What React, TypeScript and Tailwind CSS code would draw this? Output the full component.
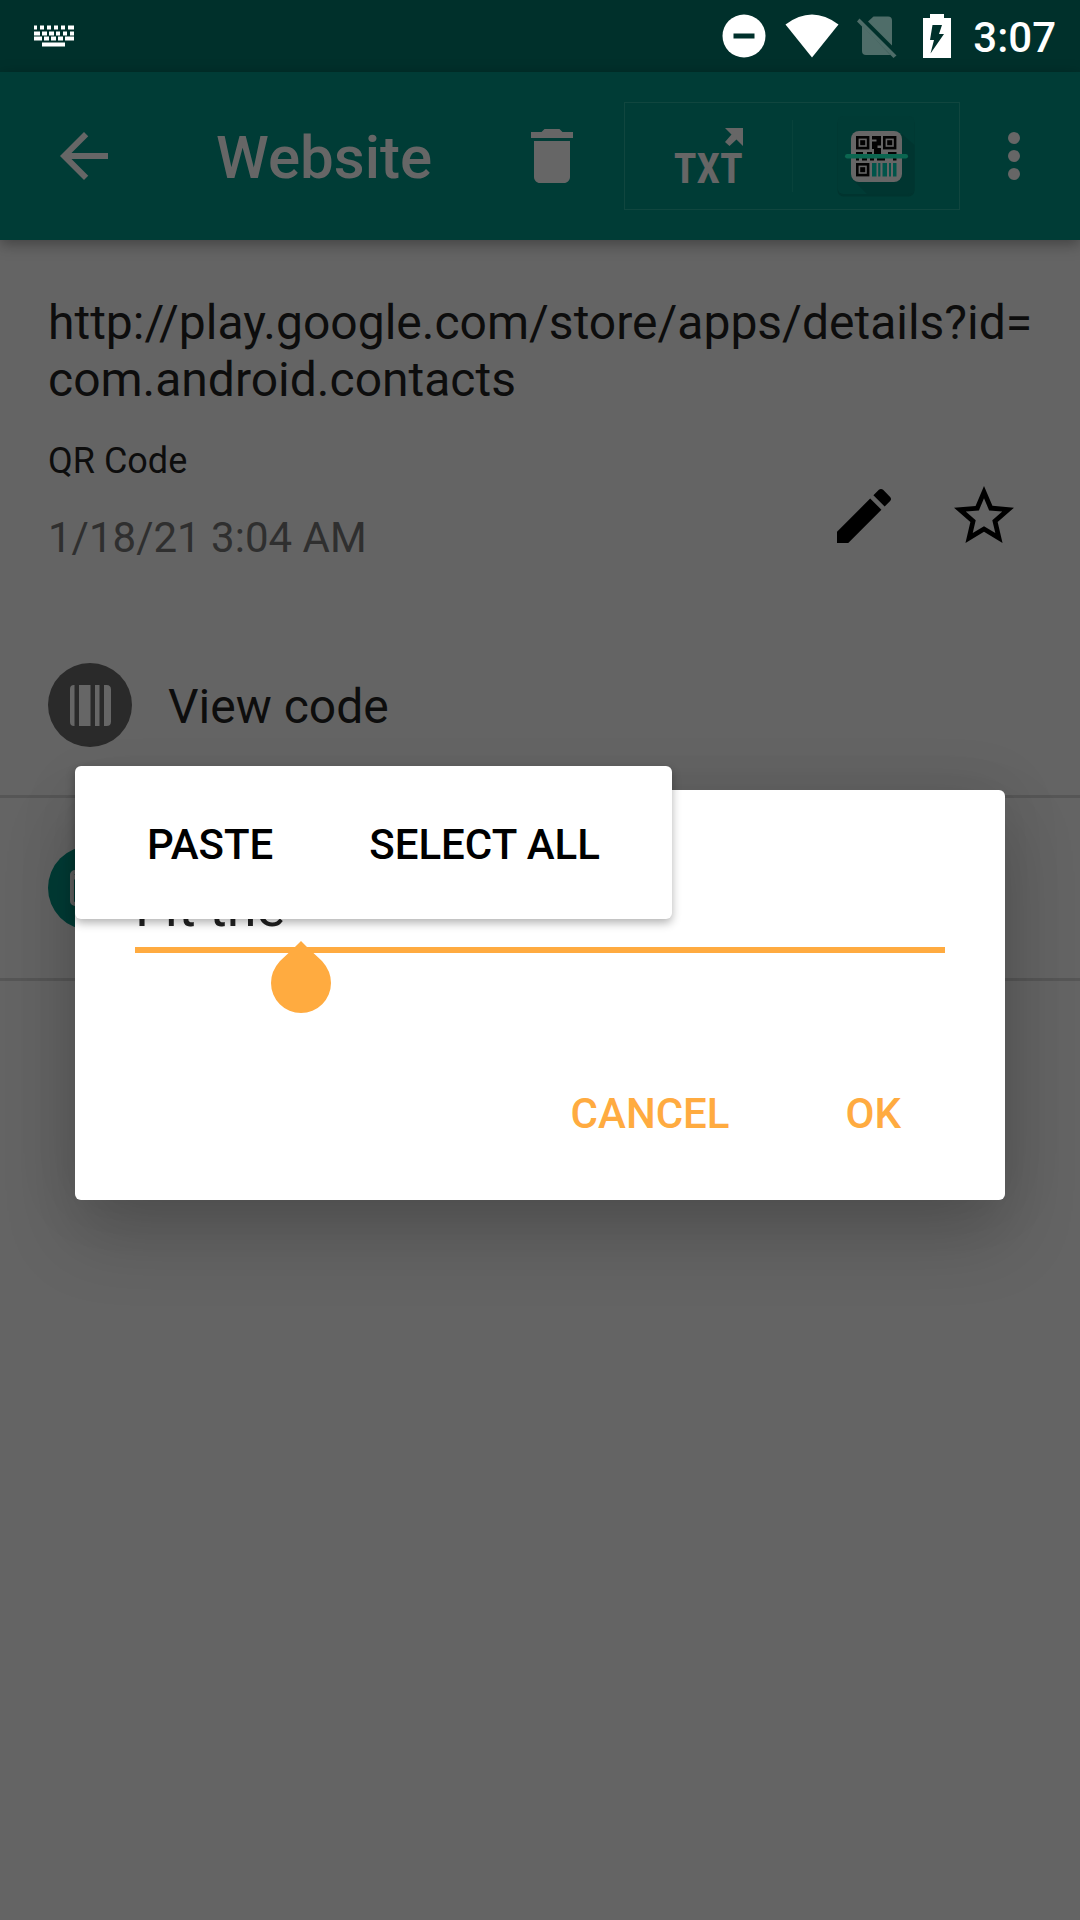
import React from "react";

const KEYS = [
  [0, 0, 3], [6, 0, 4], [13, 0, 4], [20, 0, 4], [27, 0, 4], [34, 0, 6],
  [0, 6, 6], [8, 6, 5], [15, 6, 5], [22, 6, 4], [29, 6, 4], [36, 6, 4],
  [0, 11, 8], [10, 11, 5], [17, 11, 5], [24, 11, 5], [31, 11, 9],
  [8, 17, 23],
];

function KeyboardIcon() {
  return (
    <svg viewBox="0 0 40 22" className="h-[22px] w-10" fill="#fff">
      {KEYS.map(([x, y, w]) => (
        <rect key={`${x}-${y}`} x={x} y={y + 0.5} width={w} height="4" />
      ))}
    </svg>
  );
}

function StatusBar() {
  return (
    <div className="flex h-[72px] items-center justify-between bg-[#00302b] pr-6 pl-[34px]">
      <KeyboardIcon />
      <div className="flex items-center">
        <svg viewBox="0 0 44 44" className="mr-[19px] size-11">
          <circle cx="22" cy="22" r="21.5" fill="#fff" />
          <rect x="11.5" y="19.5" width="21" height="5" fill="#00302b" />
        </svg>
        <svg viewBox="0 0 54 44" className="mr-[17px] h-11 w-[54px]" fill="#fff">
          <path d="M27 43.5 0.5 10.500Q27 -9.500 53.500 10.500Z" />
        </svg>
        <svg viewBox="0 0 42 44" className="mr-[25px] h-11 w-[42px]" fill="#4f6d69">
          <path d="M12 7.500 17.500 2.500H32Q36 2.500 36 6.500V31.500Z" />
          <path d="M6 11.500 34.500 41H10Q6 41 6 37Z" />
          <path d="M1 7.500 3.500 4.500 40.500 41.500 37.500 44Z" />
        </svg>
        <svg viewBox="0 0 28 44" className="mr-[22px] h-11 w-7">
          <path fill="#fff" d="M7 0H21V4H28V44H0V4H7Z" />
          <path fill="#00302b" d="M9.500 11H19L16 20H21L7.500 39.500 11 26H7Z" />
        </svg>
        <time className="pt-1 text-[42px] leading-[48px] font-medium text-white">3:07</time>
      </div>
    </div>
  );
}

function Finder({ x, y }: { x: number; y: number }) {
  return (
    <g>
      <rect x={x + 1.3} y={y + 1.3} width="10.800" height="10.800" fill="none" stroke="#030303" strokeWidth="2.6" />
      <rect x={x + 4.2} y={y + 4.2} width="5" height="5" fill="#030303" />
    </g>
  );
}

function ScannerIcon() {
  return (
    <svg viewBox="0 0 80 84" className="mt-1 h-[84px] w-20">
      <rect x="1.500" y="2" width="77" height="78.500" rx="6" fill="#00342f" />
      <rect x="1.500" y="0" width="77" height="78" rx="6" fill="#003b35" />
      <path d="M66 18 78.500 29V72Q78.500 78 72 78H31L17 64Z" fill="#003530" />
      <rect x="15" y="15" width="51" height="51" rx="8" fill="#666" />
      <Finder x={20} y={20} />
      <Finder x={47} y={20} />
      <Finder x={20} y={47} />
      <path
        fill="#030303"
        d="M36 20H45V29.500H41.500V32H45V37.500H38V33H36V25.500H40.500V23.500H36ZM20 36H27V40H20ZM31 36H36V40H31ZM38 36H45V40H38ZM52 36H60.500V40H52ZM20 41H23V44.500H20ZM26 41H31V44.500H26ZM34 41H38V44.500H34ZM41 41H49V44.500H41ZM57 41H60.500V44.500H57Z"
      />
      <path
        fill="#00544a"
        d="M36 47H40.500V60.500H36ZM42.200 47H44.400V60.500H42.200ZM46.500 47H51V60.500H46.500ZM53 47H55V60.500H53ZM57 47H60.500V60.500H57Z"
      />
      <rect x="9" y="38" width="63" height="4.400" rx="2.200" fill="#0b6650" />
    </svg>
  );
}

function AppBar() {
  return (
    <header className="relative flex h-[168px] items-center bg-[#003c36] pr-[30px] pl-12 text-[#666] shadow-[0_4px_14px_rgba(0,0,0,0.35)]">
      <button type="button" aria-label="Back" className="size-[72px]">
        <svg viewBox="0 0 24 24" fill="currentColor">
          <path d="M20 11H7.830l5.590-5.590L12 4l-8 8 8 8 1.410-1.410L7.830 13H20v-2z" />
        </svg>
      </button>
      <h1 className="ml-24 flex-1 pt-1 text-[60px] leading-[72px] font-medium">Website</h1>
      <button type="button" aria-label="Delete" className="mr-9 size-[72px]">
        <svg viewBox="0 0 24 24" fill="currentColor">
          <path d="M6 19c0 1.100.9 2 2 2h8c1.100 0 2-.9 2-2V7H6v12zM19 4h-3.500l-1-1h-5l-1 1H5v2h14V4z" />
        </svg>
      </button>
      <div className="flex h-[108px] w-[336px] items-center border border-[#10463f]">
        <button type="button" className="flex flex-1 justify-center">
          <span className="flex flex-col items-end gap-2">
            <svg viewBox="0 0 18 18" className="size-[18px]" fill="currentColor">
              <path d="M0 0H18V18L11.500 11.500 4.500 18 0 14 6.500 6.500Z" />
            </svg>
            <span className="font-['Liberation_Sans_Narrow','Roboto_Condensed',Roboto,sans-serif] text-[42px] leading-[30px] font-bold">
              TXT
            </span>
          </span>
        </button>
        <span className="h-[72px] w-px bg-[#08423b]" />
        <button type="button" aria-label="Scanner" className="flex flex-1 justify-center">
          <ScannerIcon />
        </button>
      </div>
      <button type="button" aria-label="More options" className="ml-[18px] size-[72px]">
        <svg viewBox="0 0 24 24" fill="currentColor">
          <circle cx="12" cy="6" r="2" />
          <circle cx="12" cy="12" r="2" />
          <circle cx="12" cy="18" r="2" />
        </svg>
      </button>
    </header>
  );
}

function Details() {
  return (
    <section className="pt-[54px] pr-9 pl-12">
      <p className="text-[48px] leading-[57px] text-[#0d0d0d]">
        http://play.google.com/store/apps/details?id=
        <wbr />
        com.android.contacts
      </p>
      <div className="flex items-center justify-between">
        <div className="pt-8">
          <p className="text-[36px] leading-[42px] text-[#0d0d0d]">QR Code</p>
          <p className="mt-[31px] text-[42px] leading-[49px] text-[#2f2f2f]">1/18/21 3:04 AM</p>
        </div>
        <div className="flex pt-[62px] text-black">
          <button type="button" aria-label="Edit" className="flex w-[120px] justify-center">
            <svg viewBox="0 0 24 24" className="size-[72px]" fill="currentColor">
              <path d="M3 17.250V21h3.750L17.810 9.940l-3.750-3.750L3 17.250zM20.710 7.040c.39-.39.39-1.020 0-1.410l-2.340-2.340c-.39-.39-1.020-.39-1.410 0l-1.830 1.830 3.750 3.750 1.830-1.830z" />
            </svg>
          </button>
          <button type="button" aria-label="Favorite" className="flex w-[120px] justify-center">
            <svg viewBox="0 0 24 24" className="size-[72px]" fill="currentColor">
              <path d="M22 9.240l-7.190-.62L12 2 9.190 8.630 2 9.240l5.460 4.730L5.820 21 12 17.270 18.180 21l-1.630-7.030L22 9.240zM12 15.400l-3.760 2.270 1-4.280-3.320-2.880 4.380-.38L12 6.100l1.710 4.040 4.380.38-3.320 2.880 1 4.280L12 15.400z" />
            </svg>
          </button>
        </div>
      </div>
    </section>
  );
}

function Actions() {
  return (
    <ul className="mt-[53px]">
      <li className="border-b-[3px] border-[#565656]">
        <button type="button" className="flex h-[180px] w-full items-center gap-9 px-12 text-left">
          <span className="flex size-[84px] items-center justify-center rounded-full bg-[#2a2a2a]">
            <svg viewBox="0 0 41 41" className="size-[41px]" fill="#666">
              <path d="M4.500 0H4Q0 0 0 4V37Q0 41 4 41H4.500ZM9 0H20.500V41H9ZM25 0H29.500V41H25ZM34 0H36.500Q41 0 41 4.500V36.500Q41 41 36.500 41H34Z" />
            </svg>
          </span>
          <span className="pt-0.5 text-[48px] leading-[57px] text-[#0d0d0d]">View code</span>
        </button>
      </li>
      <li className="border-b-[3px] border-[#565656]">
        <button type="button" aria-label="Open website" className="flex h-[180px] w-full items-center px-12">
          <span className="flex size-[84px] items-center justify-center rounded-full bg-[#003c36]">
            <svg viewBox="0 0 41 36" className="h-9 w-[41px]" fill="none" stroke="#666" strokeWidth="4">
              <rect x="2" y="2" width="37" height="32" rx="3" />
              <path d="M2 7H39" strokeWidth="5" />
            </svg>
          </span>
        </button>
      </li>
    </ul>
  );
}

function EditDialog() {
  return (
    <div className="absolute inset-0 flex items-center px-[75px] pt-[70px]">
      <form
        role="dialog"
        aria-label="Edit name"
        onSubmit={(e) => e.preventDefault()}
        className="relative w-full rounded-md bg-white px-[60px] pt-[86px] pb-[33px] shadow-[0_36px_72px_rgba(0,0,0,0.18),0_0_60px_rgba(0,0,0,0.1)]"
      >
        <div className="relative">
          <input
            type="text"
            aria-label="Name"
            defaultValue="Fit the "
            className="block h-[77px] w-full border-b-[6px] border-[#ffab40] bg-transparent pb-2 text-[54px] leading-[63px] text-[#212121] outline-none"
          />
          <svg viewBox="0 0 60 72" className="absolute top-[65px] left-[136px] h-[72px] w-[60px]" fill="#ffab40">
            <path d="M30 0Q33 3 36 6L51 20Q60 30 60 42A30 30 0 0 1 0 42Q0 30 9 20L24 6Q27 3 30 0Z" />
          </svg>
        </div>
        <div className="-mr-1 mt-[106px] flex justify-end gap-5 text-[42px] font-medium text-[#ffab40]">
          <button type="button" className="h-[108px] px-12">CANCEL</button>
          <button type="submit" className="h-[108px] px-12">OK</button>
        </div>
        <div
          role="toolbar"
          aria-label="Text actions"
          className="absolute -top-6 left-0 flex h-[153px] rounded-md bg-white px-6 text-[42px] font-medium text-black shadow-[0_4px_10px_rgba(0,0,0,0.3)]"
        >
          <button type="button" className="px-12 pt-1 whitespace-nowrap">PASTE</button>
          <button type="button" className="px-12 pt-1 whitespace-nowrap">SELECT ALL</button>
        </div>
      </form>
    </div>
  );
}

export default function App() {
  return (
    <div className="relative min-h-screen bg-[#646464] font-[Roboto,sans-serif]">
      <StatusBar />
      <AppBar />
      <main>
        <Details />
        <Actions />
      </main>
      <EditDialog />
    </div>
  );
}
